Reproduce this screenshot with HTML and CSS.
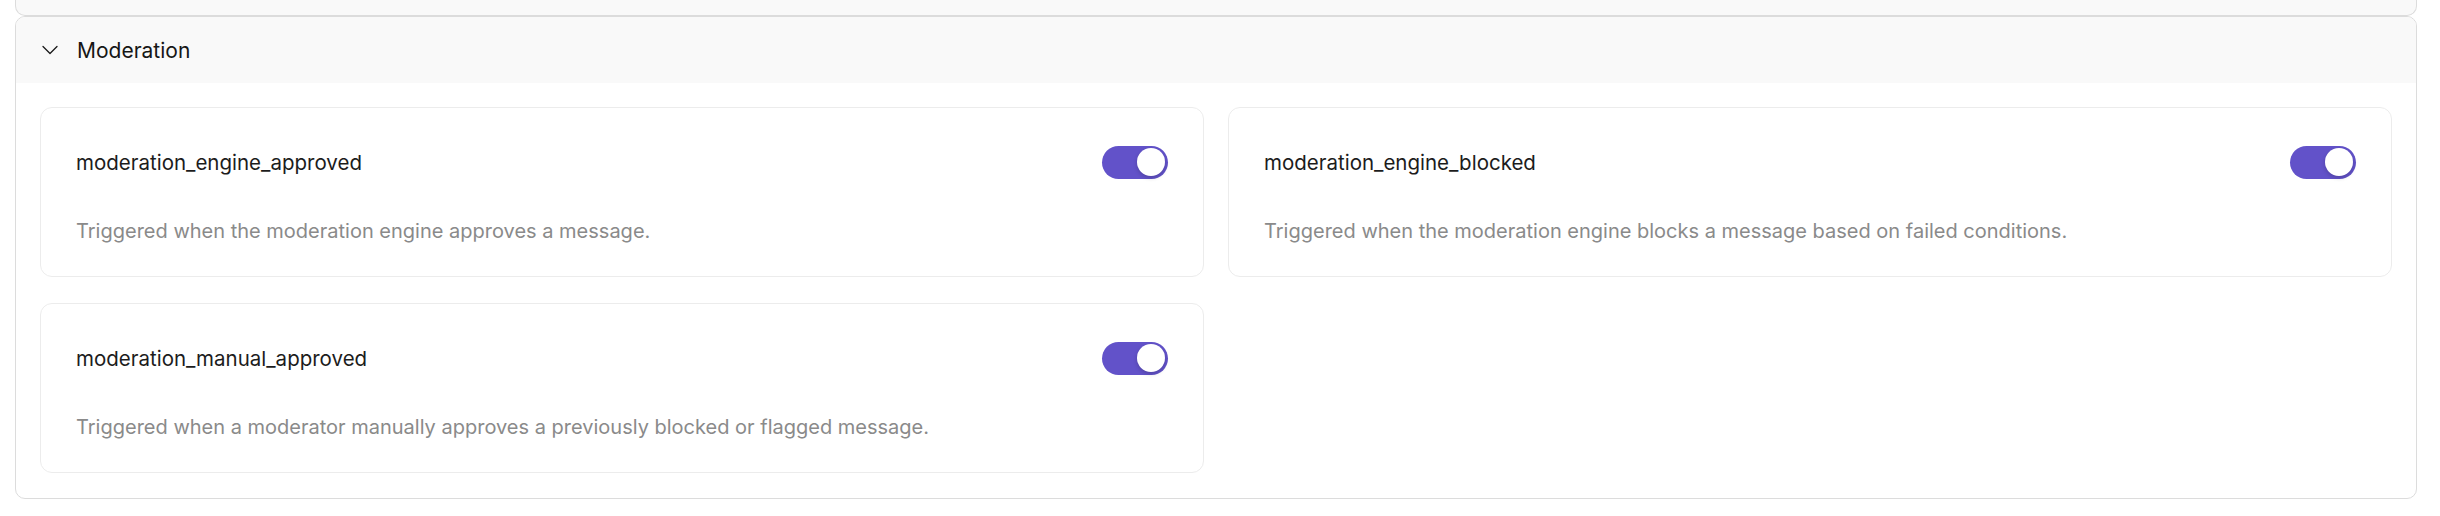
FILE: index.html
```html
<!DOCTYPE html>
<html lang="en">
<head>
<meta charset="utf-8">
<title>Moderation</title>
<link rel="stylesheet" href="styles.css">
</head>
<body>
<div class="page">
  <div class="panel-prev"></div>
  <section class="panel">
    <div class="panel-header">
      <svg class="chevron" width="16" height="16" viewBox="0 0 16 16" aria-hidden="true">
        <path d="M1 4.5 L8 11.5 L15 4.5" fill="none" stroke="#1a1a1a" stroke-width="1.3" stroke-linecap="round" stroke-linejoin="round"/>
      </svg>
      <span class="panel-title">Moderation</span>
    </div>
    <div class="panel-body">
      <div class="card">
        <div class="card-row">
          <span class="card-title">moderation_engine_approved</span>
          <span class="toggle on"><span class="knob"></span></span>
        </div>
        <p class="card-desc">Triggered when the moderation engine approves a message.</p>
      </div>
      <div class="card">
        <div class="card-row">
          <span class="card-title">moderation_engine_blocked</span>
          <span class="toggle on"><span class="knob"></span></span>
        </div>
        <p class="card-desc">Triggered when the moderation engine blocks a message based on failed conditions.</p>
      </div>
      <div class="card">
        <div class="card-row">
          <span class="card-title">moderation_manual_approved</span>
          <span class="toggle on"><span class="knob"></span></span>
        </div>
        <p class="card-desc">Triggered when a moderator manually approves a previously blocked or flagged message.</p>
      </div>
    </div>
  </section>
</div>
</body>
</html>
```
FILE: styles.css
```css
* { box-sizing: border-box; }
html, body { margin: 0; padding: 0; background: #ffffff; }
body {
  font-family: Inter, "Liberation Sans", sans-serif;
  color: #1a1a1a;
}
.page {
  padding: 0 23px 0 15px;
}
.panel-prev {
  height: 16px;
  background: #f9f9f9;
  border: 1px solid #dcdcdc;
  border-top: none;
  border-radius: 0 0 10px 10px;
}
.panel {
  border: 1px solid #dcdcdc;
  border-radius: 10px;
  overflow: hidden;
  background: #fff;
}
.panel-header {
  height: 66px;
  background: #f9f9f9;
  display: flex;
  align-items: center;
  padding-left: 26px;
  gap: 19px;
}
.chevron { display: block; }
.panel-title {
  font-size: 21px;
  font-weight: 400;
  color: #161616;
}
.panel-body {
  padding: 24px 24px 25px 24px;
  display: grid;
  grid-template-columns: 1fr 1fr;
  column-gap: 24px;
  row-gap: 26px;
}
.card {
  border: 1px solid #ececec;
  border-radius: 12px;
  padding: 35px 35px 35px 35px;
  height: 170px;
  display: flex;
  flex-direction: column;
}
.card-row {
  display: flex;
  align-items: center;
  justify-content: space-between;
  height: 38px;
}
.card-title {
  font-size: 20.5px;
  color: #1c1c1c;
}
.card-desc {
  margin: 40px 0 0 0;
  font-size: 20px;
  line-height: 20px;
  color: #8a8a8a;
}
.toggle {
  width: 66px;
  height: 33px;
  border-radius: 17px;
  background: #6252c9;
  display: flex;
  align-items: center;
  justify-content: flex-end;
  padding: 0 3px;
}
.knob {
  width: 28px;
  height: 28px;
  border-radius: 50%;
  background: #fff;
  box-shadow: 0 2px 4px rgba(0,0,0,0.18);
}
```
